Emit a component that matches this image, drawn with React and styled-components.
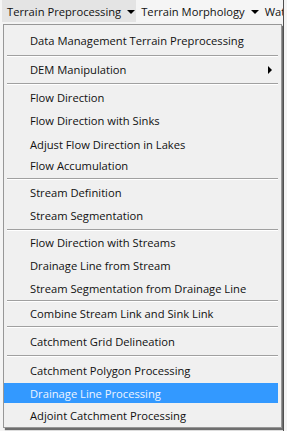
import React from "react";
import styled, { createGlobalStyle } from "styled-components";

const GlobalStyle = createGlobalStyle`
  html, body {
    margin: 0;
    padding: 0;
    background: #f2f2f2;
  }
  body {
    font-family: "Open Sans", "Noto Sans", "Liberation Sans", sans-serif;
    font-size: 12px;
    color: #000;
  }
`;

const Screen = styled.div`
  width: 287px;
  height: 431px;
  overflow: hidden;
  background: #f4f4f4;
`;

const Frame = styled.div`
  width: 284px;
  height: 431px;
  box-sizing: border-box;
  border-right: 1px solid #505050;
  display: flex;
  flex-direction: column;
  overflow: hidden;
`;

const MenuBar = styled.div`
  height: 22px;
  display: flex;
  align-items: stretch;
  background: #f5f5f5;
  padding-left: 2px;
  white-space: nowrap;
  flex-shrink: 0;
`;

const MenuTab = styled.div`
  display: flex;
  align-items: center;
  gap: 6px;
  padding: 0 1px 0 5px;
  background: ${(p) => (p.$active ? "#e4e4e4" : "transparent")};
  font-size: 11.2px;
  color: #111;
`;

const DownArrow = styled.span`
  width: 0;
  height: 0;
  border-left: 4px solid transparent;
  border-right: 4px solid transparent;
  border-top: 4px solid #000;
  margin-top: 1px;
`;

const Body = styled.div`
  flex: 1;
  padding: 2px 0 0 3px;
`;

const Dropdown = styled.div`
  width: 279px;
  box-sizing: border-box;
  background: #f0f0f0;
  border: 1px solid #979797;
  box-shadow: 2px 2px 1px rgba(0, 0, 0, 0.55);
  padding: 3px 3px 0 0;
`;

const Item = styled.div`
  height: ${(p) => p.$h}px;
  display: flex;
  align-items: center;
  justify-content: space-between;
  padding: 0 6px 0 26px;
  background: ${(p) => (p.$selected ? "#3399ff" : "transparent")};
  color: ${(p) => (p.$selected ? "#eef4ff" : "#111")};
  font-size: 11.2px;
  white-space: nowrap;
`;

const SubArrow = styled.span`
  width: 0;
  height: 0;
  border-top: 4px solid transparent;
  border-bottom: 4px solid transparent;
  border-left: 4px solid #000;
`;

const Separator = styled.div`
  height: 1px;
  margin: 2px 0 1px 3px;
  background: #a0a0a0;
  border-bottom: 1px solid #ffffff;
`;

const entries = [
  { label: "Data Management Terrain Preprocessing", h: 25 },
  "sep",
  { label: "DEM Manipulation", h: 23, sub: true },
  "sep",
  { label: "Flow Direction", h: 22 },
  { label: "Flow Direction with Sinks", h: 25 },
  { label: "Adjust Flow Direction in Lakes", h: 22 },
  { label: "Flow Accumulation", h: 21 },
  "sep",
  { label: "Stream Definition", h: 22 },
  { label: "Stream Segmentation", h: 24 },
  "sep",
  { label: "Flow Direction with Streams", h: 20 },
  { label: "Drainage Line from Stream", h: 26 },
  { label: "Stream Segmentation from Drainage Line", h: 20 },
  "sep",
  { label: "Combine Stream Link and Sink Link", h: 21 },
  "sep",
  { label: "Catchment Grid Delineation", h: 24 },
  "sep",
  { label: "Catchment Polygon Processing", h: 25 },
  { label: "Drainage Line Processing", h: 20, selected: true },
  { label: "Adjoint Catchment Processing", h: 24 },
];

export default function App() {
  return (
    <>
      <GlobalStyle />
      <Screen>
        <Frame>
          <MenuBar>
            <MenuTab $active>
              Terrain Preprocessing <DownArrow />
            </MenuTab>
            <MenuTab>
              Terrain Morphology <DownArrow />
            </MenuTab>
            <MenuTab>Watershed Processing</MenuTab>
          </MenuBar>
          <Body>
            <Dropdown>
              {entries.map((e, i) =>
                e === "sep" ? (
                  <Separator key={i} />
                ) : (
                  <Item key={i} $h={e.h} $selected={e.selected}>
                    <span>{e.label}</span>
                    {e.sub && <SubArrow />}
                  </Item>
                )
              )}
            </Dropdown>
          </Body>
        </Frame>
      </Screen>
    </>
  );
}
